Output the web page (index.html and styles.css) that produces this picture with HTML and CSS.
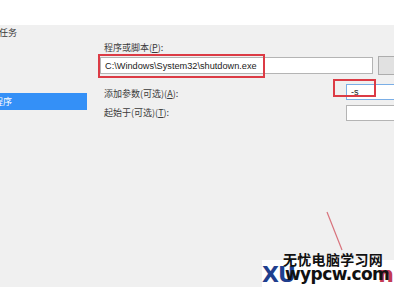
FILE: index.html
```html
<!DOCTYPE html>
<html lang="zh-CN">
<head>
    <meta charset="UTF-8">
    <meta name="viewport" content="width=device-width, initial-scale=1.0">
    <title>操作</title>
    <link rel="stylesheet" href="styles.css">
</head>
<body>
    <div class="top-strip"></div>
    <div class="main">
        <aside class="nav">
            <div class="nav-title">任务</div>
            <div class="nav-item">启动程序</div>
        </aside>
        <section class="pane">
            <div class="label first">程序或脚本(<u>P</u>):</div>
            <div class="prog-row">
                <input type="text" class="input-box wide" value="C:\Windows\System32\shutdown.exe">
                <button class="browse"></button>
            </div>
            <div class="field-row args">
                <span class="label">添加参数(可选)(<u>A</u>):</span>
                <input type="text" class="input-box short focus" value="-s">
            </div>
            <div class="field-row start">
                <span class="label">起始于(可选)(<u>T</u>):</span>
                <input type="text" class="input-box short" value="">
            </div>
        </section>
    </div>

    <!-- red marks drawn over the screenshot -->
    <div class="mark mark-prog"></div>
    <div class="mark mark-args"></div>
    <svg class="arrow" width="30" height="50" viewBox="0 0 30 50">
        <line x1="2" y1="2" x2="17" y2="40" stroke="#d8727c" stroke-width="1.2"/>
    </svg>

    <div class="watermark">
        <div class="wm-back"><span class="wm-blue">XU</span><span class="wm-red">n</span></div>
        <div class="wm-title">无忧电脑学习网</div>
        <div class="wm-url">wypcw.com</div>
    </div>
</body>
</html>
```

FILE: styles.css
```css
html, body {
    margin: 0;
    padding: 0;
}
body {
    width: 394px;
    height: 287px;
    overflow: hidden;
    position: relative;
    background: #f0f0f0;
    font-family: "Microsoft YaHei", "Noto Sans CJK SC", sans-serif;
    font-size: 9px;
    color: #3a3a3a;
}
.top-strip {
    height: 25px;
    background: #fff;
}
.main {
    display: flex;
}
.nav {
    width: 87px;
    flex: none;
    overflow: hidden;
}
.nav-title {
    line-height: 12px;
    padding-top: 2px;
    margin-left: -1px;
}
.nav-item {
    margin-top: 54px;
    height: 17px;
    line-height: 17px;
    background: #3490f7;
    color: #fff;
    text-indent: -24px;
    white-space: nowrap;
    overflow: hidden;
}
.pane {
    padding-left: 13px;
    flex: none;
    width: 400px;
}
.label {
    line-height: 12px;
    white-space: nowrap;
}
.label u {
    text-decoration: underline;
}
.label.first {
    margin-top: 17px;
    padding-left: 4px;
}
.prog-row {
    display: flex;
    align-items: flex-start;
    margin-top: 3px;
}
.input-box {
    box-sizing: border-box;
    border: 1px solid #b4b4b4;
    background: #fff;
    font-family: "Segoe UI", "Liberation Sans", "Noto Sans", sans-serif;
    font-size: 9.2px;
    color: #222;
    padding: 0 4px;
    margin: 0;
    outline: none;
}
.wide {
    width: 273px;
    height: 17px;
}
.browse {
    margin-left: 5px;
    margin-top: -1px;
    width: 60px;
    height: 19px;
    border: 1px solid #adadad;
    background: #e1e1e1;
    padding: 0;
}
.field-row {
    display: flex;
    align-items: center;
    height: 16px;
}
.field-row .label {
    width: 246px;
    padding-left: 4px;
    flex: none;
    box-sizing: border-box;
}
.args {
    margin-top: 9px;
}
.args .label {
    padding-top: 3px;
}
.start {
    margin-top: 5px;
}
.short {
    width: 80px;
    height: 16px;
}
.focus {
    border-color: #7aaee6;
}
.mark {
    position: absolute;
    border: 2px solid #dc3b45;
    box-sizing: border-box;
}
.mark-prog {
    left: 98px;
    top: 54px;
    width: 167px;
    height: 24px;
}
.mark-args {
    left: 333px;
    top: 79px;
    width: 43px;
    height: 18px;
}
.arrow {
    position: absolute;
    left: 325px;
    top: 210px;
}
.watermark {
    position: absolute;
    left: 262px;
    top: 250px;
    width: 132px;
    height: 37px;
}
.wm-back {
    position: absolute;
    left: 0;
    top: 10px;
    width: 132px;
    height: 27px;
    background: #fff;
    font-family: "DejaVu Sans", sans-serif;
    font-weight: bold;
    font-size: 22px;
    line-height: 30px;
    display: flex;
    justify-content: space-between;
    overflow: hidden;
}
.wm-blue {
    color: #1f3f8e;
    letter-spacing: -1px;
}
.wm-red {
    color: #c23a55;
}
.wm-title {
    position: absolute;
    left: 21px;
    top: 1px;
    font-size: 14px;
    font-weight: bold;
    color: #111;
    letter-spacing: 0.3px;
    white-space: nowrap;
    line-height: 16px;
}
.wm-url {
    position: absolute;
    left: 23px;
    top: 14px;
    font-family: "DejaVu Sans", sans-serif;
    font-size: 17px;
    font-weight: bold;
    color: #111;
    letter-spacing: -0.6px;
    line-height: 20px;
}
```
